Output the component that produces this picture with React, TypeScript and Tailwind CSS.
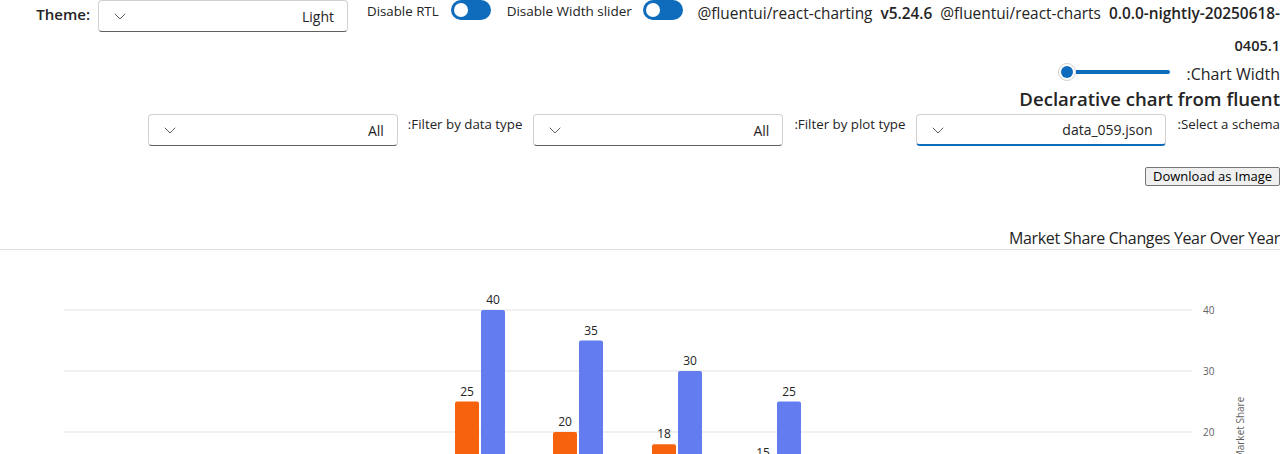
import React from 'react';

const font = { fontFamily: '"Segoe UI", "Open Sans", "Noto Sans", sans-serif' };

const Chevron = () => (
    <svg width="14" height="12" viewBox="0 0 14 12" className="text-[#616161]">
        <path d="M2 4 L7 9 L12 4" fill="none" stroke="currentColor" strokeWidth="1" strokeLinecap="round" strokeLinejoin="round" />
    </svg>
);

const Dropdown = ({ value, focused }: { value: string; focused?: boolean }) => (
    <div className={`relative flex items-center justify-between w-[250px] h-[32px] pl-[14px] pr-[13px] bg-white rounded-[4px] border border-[#d1d1d1] ${focused ? 'border-b-[#0f6cbd] border-b-2' : 'border-b-[#616161]'}`}>
        <Chevron />
        <span className="text-[14px] text-[#242424]">{value}</span>
    </div>
);

const Switch = () => (
    <div className="flex items-center w-[40px] h-[20px] rounded-full bg-[#0f6cbd] px-[3px]">
        <div className="w-[14px] h-[14px] rounded-full bg-white" />
    </div>
);

const Slider = () => (
    <div className="flex items-center w-[112px] h-[20px]">
        <div className="w-[18px] h-[18px] rounded-full bg-white border border-[#d1d1d1] flex items-center justify-center">
            <div className="w-[12px] h-[12px] rounded-full bg-[#0f6cbd]" />
        </div>
        <div className="flex-1 h-[4px] bg-[#0f6cbd] rounded-r-full" />
    </div>
);

// group x positions of orange bar; blue sits 26px to the right
const groups = [
    { x: 455, a: 25, b: 40 },
    { x: 553, a: 20, b: 35 },
    { x: 652, a: 18, b: 30 },
    { x: 751, a: 15, b: 25 },
];
const base = 304; // y of value 0 in svg coords
const scale = 6.1;

const Chart = () => (
    <svg width="1280" height="320" className="block">
        {[40, 30, 20, 10].map(v => (
            <g key={v}>
                <line x1="64" x2="1192" y1={base - v * scale} y2={base - v * scale} stroke="#e1e1e1" strokeWidth="1" />
                <text x="1203" y={base - v * scale + 3.5} fontSize="10" fill="#616161">{v}</text>
            </g>
        ))}
        <text transform="translate(1244 178) rotate(-90)" fontSize="10" fill="#616161" textAnchor="middle">Market Share</text>
        {groups.map(g => (
            <g key={g.x}>
                <rect x={g.x} y={base - g.a * scale} width="24" height={g.a * scale} rx="2" fill="#f7630c" />
                <text x={g.x + 12} y={base - g.a * scale - 6} fontSize="12" fill="#242424" textAnchor="middle">{g.a}</text>
                <rect x={g.x + 26} y={base - g.b * scale} width="24" height={g.b * scale} rx="2" fill="#637cef" />
                <text x={g.x + 38} y={base - g.b * scale - 6} fontSize="12" fill="#242424" textAnchor="middle">{g.b}</text>
            </g>
        ))}
    </svg>
);

export default function App() {
    return (
        <div style={font} className="w-[1280px] bg-white text-[#242424] overflow-hidden">
            {/* Top bar */}
            <div className="flex items-start h-[32px]">
                <div className="w-[90px] text-right text-[15px] font-semibold leading-[28px]">Theme:</div>
                <div className="ml-[8px]"><Dropdown value="Light" /></div>
                <span className="ml-[19px] text-[13.3px] leading-[22px]">Disable RTL</span>
                <div className="ml-[12px]"><Switch /></div>
                <span className="ml-[16px] text-[13.5px] leading-[22px]">Disable Width slider</span>
                <div className="ml-[11px]"><Switch /></div>
                <div className="flex-1 text-right text-[15.4px] leading-[32px] -mt-[2px]">
                    @fluentui/react-charting <b className="font-semibold ml-1">v5.24.6</b>{' '}
                    <span className="ml-1">@fluentui/react-charts</span>{' '}
                    <b className="font-semibold ml-1">0.0.0-nightly-20250618-</b>
                </div>
            </div>
            <div className="text-right text-[14.5px] font-semibold leading-[32px] -mt-[2px]">0405.1</div>

            {/* Chart width slider */}
            <div className="flex justify-end items-center gap-[17px] h-[24px] mt-[-2px]">
                <Slider />
                <span className="text-[16px] pt-[4px]">:Chart Width</span>
            </div>

            <div className="text-right text-[18.6px] font-semibold leading-[26px] mt-[2px]">Declarative chart from fluent</div>

            {/* Filters */}
            <div className="flex justify-end items-start mt-[2px] h-[32px]">
                <Dropdown value="All" />
                <span className="ml-[10px] text-[13.3px] leading-[20px]">:Filter by data type</span>
                <div className="ml-[11px]"><Dropdown value="All" /></div>
                <span className="ml-[11px] text-[13.3px] leading-[20px]">:Filter by plot type</span>
                <div className="ml-[11px]"><Dropdown value="data_059.json" focused /></div>
                <span className="ml-[11px] text-[13.3px] leading-[20px]">:Select a schema</span>
            </div>

            <div className="flex justify-end mt-[21px]">
                <button className="h-[19px] px-[7px] text-[13px] leading-[17px] bg-[#efefef] border border-[#767676] rounded-[2px] text-black">Download as Image</button>
            </div>

            {/* Chart */}
            <div className="mt-[42px] text-right text-[16px] leading-[20px] tracking-[-0.35px]">Market Share Changes Year Over Year</div>
            <div className="h-px bg-[#e0e0e0] mt-[1px]" />
            <Chart />
        </div>
    );
}
